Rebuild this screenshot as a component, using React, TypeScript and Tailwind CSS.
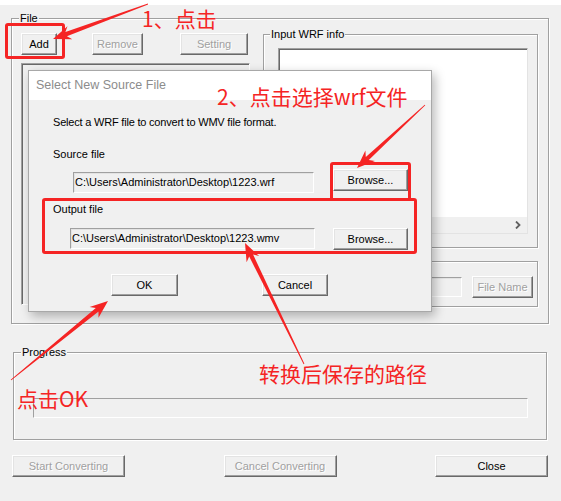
const RED = "#f52424";

function arrowPoints(x1: number, y1: number, x2: number, y2: number) {
  const dx = x2 - x1;
  const dy = y2 - y1;
  const len = Math.hypot(dx, dy);
  const ux = dx / len;
  const uy = dy / len;
  const nx = -uy;
  const ny = ux;
  const head = 18;
  const wing = 7;
  const neck = 2.2;
  const tail = 0.4;
  const bx = x2 - ux * head;
  const by = y2 - uy * head;
  const p = (x: number, y: number) => `${x.toFixed(1)},${y.toFixed(1)}`;
  return [
    p(x1 + nx * tail, y1 + ny * tail),
    p(bx + ux * 4 + nx * neck, by + uy * 4 + ny * neck),
    p(bx + nx * wing, by + ny * wing),
    p(x2, y2),
    p(bx - nx * wing, by - ny * wing),
    p(bx + ux * 4 - nx * neck, by + uy * 4 - ny * neck),
    p(x1 - nx * tail, y1 - ny * tail)
  ].join(" ");
}

function WinButton({
  label,
  disabled,
  className
}: {
  label: string;
  disabled?: boolean;
  className?: string;
}) {
  return (
    <div
      className={`flex h-[22px] shrink-0 items-center justify-center border border-t-white border-l-white border-r-[#696969] border-b-[#696969] bg-[#f0f0f0] shadow-[inset_-1px_-1px_0_#a0a0a0,inset_1px_1px_0_#e3e3e3] ${
        disabled ? "text-[#a0a0a0] [text-shadow:1px_1px_0_#fff]" : "text-black"
      } ${className ?? ""}`}
    >
      {label}
    </div>
  );
}

function Field({ value, className }: { value: string; className?: string }) {
  return (
    <div
      className={`flex shrink-0 items-center overflow-hidden whitespace-nowrap border border-t-[#a0a0a0] border-l-[#a0a0a0] border-r-white border-b-white bg-[#f0f0f0] pl-[1px] shadow-[inset_1px_1px_0_#e3e3e3] ${
        className ?? ""
      }`}
    >
      {value}
    </div>
  );
}

function GroupLabel({ label, className }: { label: string; className?: string }) {
  return (
    <div className={`-mt-[7px] w-fit bg-[#f0f0f0] px-[1px] leading-[13px] ${className ?? ""}`}>{label}</div>
  );
}

const groupBox = "border border-[#a0a0a0] shadow-[inset_1px_1px_0_#fff,1px_1px_0_#fff]";

export default function App() {
  return (
    <div className="relative h-[501px] w-[561px] overflow-hidden bg-[#f0f0f0] font-['Liberation_Sans',Arial,sans-serif] text-[11px] text-black">
      <div className="h-[5px] bg-white" />

      {/* File group */}
      <div className={`ml-[11px] mt-[13px] h-[306px] w-[538px] ${groupBox}`}>
        <GroupLabel label="File" className="ml-[7px]" />
        <div className="flex">
          <div className="ml-[9px] flex w-[229px] flex-col">
            <div className="mt-[8px] flex">
              <WinButton label="Add" className="w-[36px]" />
              <WinButton label="Remove" disabled className="ml-[35px] w-[51px]" />
              <WinButton label="Setting" disabled className="ml-[37px] w-[68px]" />
            </div>
            <div className="mt-[8px] h-[242px] border border-t-[#a0a0a0] border-l-[#a0a0a0] border-r-white border-b-white bg-[#f0f0f0] shadow-[inset_1px_1px_0_#696969]" />
          </div>

          <div className="ml-[13px] flex w-[275px] flex-col">
            <div className={`mt-[9px] h-[214px] ${groupBox}`}>
              <GroupLabel label="Input WRF info" className="ml-[6px]" />
              <div className="ml-[14px] mt-[7px] flex h-[186px] w-[250px] flex-col border border-t-[#a0a0a0] border-l-[#a0a0a0] border-r-[#e3e3e3] border-b-[#e3e3e3] shadow-[inset_1px_1px_0_#696969]">
                <div className="ml-[1px] mt-[1px] flex-1 bg-white" />
                <div className="flex h-[16px] items-center justify-end bg-[#f0f0f0] pr-[6px]">
                  <svg width="6" height="8" viewBox="0 0 6 8">
                    <path d="M1 0.5 L4.5 4 L1 7.5" fill="none" stroke="#606060" strokeWidth="1.8" />
                  </svg>
                </div>
              </div>
            </div>
            <div className={`mt-[13px] flex h-[46px] items-center justify-end pr-[4px] pt-[6px] ${groupBox}`}>
              <Field value="" className="h-[20px] w-[150px]" />
              <WinButton label="File Name" disabled className="ml-[10px] w-[61px]" />
            </div>
          </div>
        </div>
      </div>

      {/* Progress group */}
      <div className={`ml-[13px] mt-[28px] h-[88px] w-[534px] ${groupBox}`}>
        <GroupLabel label="Progress" className="ml-[7px]" />
        <div className="ml-[19px] mt-[39px] h-[20px] w-[495px] border border-t-[#a0a0a0] border-l-[#a0a0a0] border-r-white border-b-white" />
      </div>

      <div className="ml-[12px] mt-[15px] flex w-[536px] justify-between">
        <WinButton label="Start Converting" disabled className="w-[113px]" />
        <WinButton label="Cancel Converting" disabled className="w-[113px]" />
        <WinButton label="Close" className="w-[113px]" />
      </div>

      {/* Dialog */}
      <div className="absolute left-[28px] top-[70px] flex h-[242px] w-[404px] flex-col border border-[#a8a8a8] bg-[#f0f0f0] shadow-[3px_4px_10px_rgba(0,0,0,0.28)]">
        <div className="flex h-[29px] items-center bg-white pl-[7px] text-[12.5px] text-[#8c8c8c]">
          Select New Source File
        </div>
        <div className="flex flex-col">
          <div className="ml-[24px] mt-[16px] leading-[13px] tracking-[-0.2px]">
            Select a WRF file to convert to WMV file format.
          </div>
          <div className="ml-[24px] mt-[19px] leading-[13px]">Source file</div>
          <div className="mt-[8px] flex items-start">
            <Field value="C:\Users\Administrator\Desktop\1223.wrf" className="ml-[44px] mt-[3px] h-[21px] w-[241px]" />
            <WinButton label="Browse..." className="ml-[19px] h-[20px] w-[75px]" />
          </div>
          <div className="ml-[24px] mt-[10px] leading-[13px]">Output file</div>
          <div className="mt-[12px] flex items-start">
            <Field value="C:\Users\Administrator\Desktop\1223.wmv" className="ml-[41px] h-[21px] w-[245px]" />
            <WinButton label="Browse..." className="ml-[18px] h-[20px] w-[75px]" />
          </div>
          <div className="mt-[24px] flex">
            <WinButton label="OK" className="ml-[82px] w-[67px]" />
            <WinButton label="Cancel" className="ml-[84px] w-[66px]" />
          </div>
        </div>
      </div>

      {/* Annotations */}
      <div className="absolute left-[5px] top-[23px] h-[36px] w-[60px] rounded-[3px] border-[3px] border-[#f52424]" />
      <div className="absolute left-[330px] top-[162px] h-[39px] w-[81px] rounded-[3px] border-[3px] border-[#f52424]" />
      <div className="absolute left-[42px] top-[198px] h-[56px] w-[375px] rounded-[3px] border-[3px] border-[#f52424]" />

      <div className="absolute left-[142px] top-[8px] whitespace-nowrap font-['Noto_Sans_CJK_SC',sans-serif] text-[21px] leading-[21px] text-[#f52424]">
        1、点击
      </div>
      <div className="absolute left-[217px] top-[86px] whitespace-nowrap font-['Noto_Sans_CJK_SC',sans-serif] text-[21px] leading-[21px] text-[#f52424]">
        2、点击选择wrf文件
      </div>
      <div className="absolute left-[259px] top-[363px] whitespace-nowrap font-['Noto_Sans_CJK_SC',sans-serif] text-[21px] leading-[21px] text-[#f52424]">
        转换后保存的路径
      </div>
      <div className="absolute left-[17px] top-[388px] whitespace-nowrap font-['Noto_Sans_CJK_SC',sans-serif] text-[21px] leading-[21px] text-[#f52424]">
        点击OK
      </div>

      <svg className="pointer-events-none absolute inset-0" width="561" height="501" viewBox="0 0 561 501">
        <polygon points={arrowPoints(148, 4, 53, 39)} fill={RED} />
        <polygon points={arrowPoints(425, 105, 357, 168)} fill={RED} />
        <polygon points={arrowPoints(304, 364, 245, 243)} fill={RED} />
        <polygon points={arrowPoints(11, 380, 108, 301)} fill={RED} />
      </svg>
    </div>
  );
}
